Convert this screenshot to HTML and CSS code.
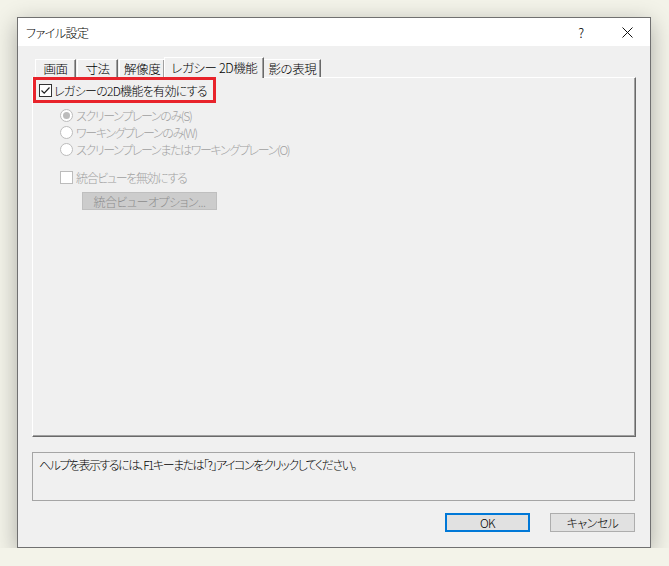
FILE: index.html
```html
<!DOCTYPE html>
<html lang="ja">

<head>
  <meta charset="UTF-8">
  <meta name="viewport" content="width=device-width, initial-scale=1.0">
  <title>ファイル設定</title>
  <link rel="stylesheet" href="styles.css">
</head>

<body>
  <div class="window">
    <div class="titlebar">
      <span class="title">ファイル設定</span>
      <span class="tbtn">?</span>
      <span class="tbtn">
        <svg width="11" height="11" viewBox="0 0 11 11">
          <path d="M0.5 0.5 L10.5 10.5 M10.5 0.5 L0.5 10.5" stroke="#111" stroke-width="1" fill="none" />
        </svg>
      </span>
    </div>

    <div class="client">
      <div class="tabs">
        <div class="tab">画面</div>
        <div class="tab">寸法</div>
        <div class="tab">解像度</div>
        <div class="tab active">レガシー 2D機能</div>
        <div class="tab">影の表現</div>
      </div>

      <div class="panel">
        <div class="mark">
          <span class="check">
            <svg width="11" height="11" viewBox="0 0 11 11">
              <path d="M1.5 5.5 L4.2 8.2 L9.5 2.5" stroke="#222" stroke-width="1.2" fill="none" />
            </svg>
          </span>
          <span>レガシーの2D機能を有効にする</span>
        </div>

        <div class="options">
          <div class="row"><span class="radio on"></span>スクリーンプレーンのみ(S)</div>
          <div class="row"><span class="radio"></span>ワーキングプレーンのみ(W)</div>
          <div class="row"><span class="radio"></span>スクリーンプレーンまたはワーキングプレーン(O)</div>
          <div class="row gap"><span class="check off"></span>統合ビューを無効にする</div>
          <div class="btn sub">統合ビューオプション...</div>
        </div>
      </div>

      <div class="helpbox">ヘルプを表示するには、F1キーまたは「?」アイコンをクリックしてください。</div>

      <div class="buttons">
        <div class="btn ok">OK</div>
        <div class="btn">キャンセル</div>
      </div>
    </div>
  </div>
</body>

</html>
```

FILE: styles.css
```css
body {
  margin: 0;
  background-color: #f3f3e9;
  font-family: "Noto Sans CJK JP", "Noto Sans", sans-serif;
  font-size: 12px;
  font-weight: 300;
  font-feature-settings: "palt";
  letter-spacing: -0.5px;
  color: #000;
}

.window {
  width: 632px;
  height: 529px;
  margin: 17px 0 0 17px;
  border: 1px solid #707070;
  background-color: #f0f0f0;
  box-shadow: 0 6px 22px rgba(0, 0, 0, 0.3);
  display: flex;
  flex-direction: column;
}

.titlebar {
  height: 28px;
  background-color: #fff;
  display: flex;
  align-items: center;
}

.title {
  flex: 1;
  padding-left: 8px;
}

.tbtn {
  width: 46px;
  height: 28px;
  display: flex;
  align-items: center;
  justify-content: center;
  font-size: 13px;
}

.client {
  flex: 1;
  padding: 11px 14px 0;
  display: flex;
  flex-direction: column;
}

/* タブ */
.tabs {
  height: 20px;
  padding-left: 3px;
  display: flex;
  align-items: flex-end;
  font-size: 12.5px;
  letter-spacing: -0.4px;
}

.tab {
  min-width: 41px;
  height: 18px;
  line-height: 17px;
  padding: 0 4px;
  margin-right: 1px;
  box-sizing: border-box;
  text-align: center;
  border: 1px solid #fff;
  border-right-color: #696969;
  border-bottom: 0;
  box-shadow: inset -1px 0 #a0a0a0;
  background-color: #f0f0f0;
}

.tab.active {
  height: 21px;
  line-height: 19px;
  margin: 0 -1px -1px -2px;
  padding: 0 6px;
  position: relative;
  z-index: 1;
}

.panel {
  height: 360px;
  box-sizing: border-box;
  border: 1px solid #fff;
  border-right-color: #696969;
  border-bottom-color: #696969;
  box-shadow: inset -1px -1px #a0a0a0;
  display: flex;
  flex-direction: column;
  align-items: flex-start;
}

/* 赤枠 */
.mark {
  height: 26px;
  box-sizing: border-box;
  margin: -1px 0 0 0;
  padding: 0 6px 0 3px;
  border: 3px solid #e8232b;
  display: flex;
  align-items: center;
  gap: 2px;
  position: relative;
  z-index: 2;
  letter-spacing: -0.7px;
}

.check {
  width: 13px;
  height: 13px;
  box-sizing: border-box;
  border: 1px solid #333;
  background-color: #fff;
  display: flex;
  align-items: center;
  justify-content: center;
}

.check.off {
  border-color: #bcbcbc;
}

.options {
  padding: 4px 0 0 27px;
  color: #a0a0a0;
  letter-spacing: -1.35px;
}

.row {
  height: 17px;
  display: flex;
  align-items: center;
  gap: 3px;
}

.row.gap {
  margin-top: 11px;
}

.radio {
  width: 13px;
  height: 13px;
  box-sizing: border-box;
  border: 1px solid #bcbcbc;
  border-radius: 50%;
  background-color: #fff;
  display: flex;
  align-items: center;
  justify-content: center;
}

.radio.on::after {
  content: "";
  width: 7px;
  height: 7px;
  border-radius: 50%;
  background-color: #bcbcbc;
}

/* ボタン */
.btn {
  width: 85px;
  height: 19px;
  box-sizing: border-box;
  border: 1px solid #adadad;
  background-color: #e1e1e1;
  display: flex;
  align-items: center;
  justify-content: center;
}

.btn.sub {
  width: 135px;
  height: 18px;
  margin: 6px 0 0 22px;
  border-color: #bfbfbf;
  background-color: #cccccc;
  color: #8c8c8c;
  letter-spacing: -0.5px;
}

.btn.ok {
  border: 2px solid #0078d7;
}

.helpbox {
  height: 49px;
  box-sizing: border-box;
  margin-top: 15px;
  margin-right: 1px;
  padding: 4px 6px;
  line-height: 16px;
  border: 1px solid #a5a5a5;
  letter-spacing: -1.5px;
}

.buttons {
  margin-top: 12px;
  margin-right: 1px;
  display: flex;
  justify-content: flex-end;
  gap: 20px;
}
```
